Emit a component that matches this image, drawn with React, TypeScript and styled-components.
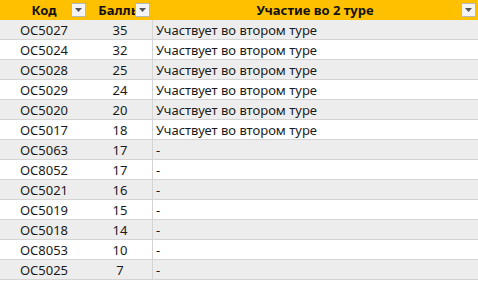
import styled, { createGlobalStyle } from 'styled-components';

type Row = { code: string; score: number; status: string };

const ROWS: Row[] = [
  { code: 'OC5027', score: 35, status: 'Участвует во втором туре' },
  { code: 'OC5024', score: 32, status: 'Участвует во втором туре' },
  { code: 'OC5028', score: 25, status: 'Участвует во втором туре' },
  { code: 'OC5029', score: 24, status: 'Участвует во втором туре' },
  { code: 'OC5020', score: 20, status: 'Участвует во втором туре' },
  { code: 'OC5017', score: 18, status: 'Участвует во втором туре' },
  { code: 'OC5063', score: 17, status: '-' },
  { code: 'OC8052', score: 17, status: '-' },
  { code: 'OC5021', score: 16, status: '-' },
  { code: 'OC5019', score: 15, status: '-' },
  { code: 'OC5018', score: 14, status: '-' },
  { code: 'OC8053', score: 10, status: '-' },
  { code: 'OC5025', score: 7, status: '-' },
];

const GlobalStyle = createGlobalStyle`
  body {
    margin: 0;
    background: #ffffff;
    font-family: "Noto Sans", "Open Sans", sans-serif;
  }
`;

const Table = styled.div`
  width: 478px;
  display: flex;
  flex-direction: column;
  font-size: 13px;
  color: #1a1a1a;
`;

const Line = styled.div<{ $shade?: boolean }>`
  display: grid;
  grid-template-columns: 88px 64px 1fr;
  height: 20px;
  box-sizing: border-box;
  border-bottom: 1px solid #d4d4d4;
  background-color: ${(p) => (p.$shade ? '#ededed' : '#ffffff')};
`;

const HeadLine = styled(Line)`
  background-color: #ffc000;
  border-bottom: none;
  font-weight: 700;
  color: #111;
`;

const HeadCell = styled.div`
  position: relative;
  display: flex;
  align-items: center;
  justify-content: center;
  overflow: hidden;
  white-space: nowrap;
`;

const FilterButton = styled.span`
  position: absolute;
  right: 2px;
  top: 3px;
  width: 15px;
  height: 14px;
  box-sizing: border-box;
  background: #f4f4f4;
  border: 1px solid #b8b8b8;
  display: flex;
  align-items: center;
  justify-content: center;
`;

const Cell = styled.div<{ $align?: 'left' | 'center'; $divider?: boolean }>`
  display: flex;
  align-items: center;
  justify-content: ${(p) => (p.$align === 'left' ? 'flex-start' : 'center')};
  padding-left: ${(p) => (p.$align === 'left' ? '3px' : '0')};
  border-left: ${(p) => (p.$divider ? '1px solid #d4d4d4' : 'none')};
  white-space: nowrap;
  overflow: hidden;
`;

function Filter() {
  return (
    <FilterButton>
      <svg width="7" height="4" viewBox="0 0 7 4">
        <polygon points="0,0 7,0 3.5,4" fill="#555" />
      </svg>
    </FilterButton>
  );
}

export default function App() {
  return (
    <>
      <GlobalStyle />
      <Table>
        <HeadLine>
          <HeadCell>
            Код
            <Filter />
          </HeadCell>
          <HeadCell>
            Баллы
            <Filter />
          </HeadCell>
          <HeadCell>
            Участие во 2 туре
            <Filter />
          </HeadCell>
        </HeadLine>
        {ROWS.map((r, i) => (
          <Line key={r.code} $shade={i % 2 === 0}>
            <Cell>{r.code}</Cell>
            <Cell>{r.score}</Cell>
            <Cell $align="left" $divider>
              {r.status}
            </Cell>
          </Line>
        ))}
      </Table>
    </>
  );
}
